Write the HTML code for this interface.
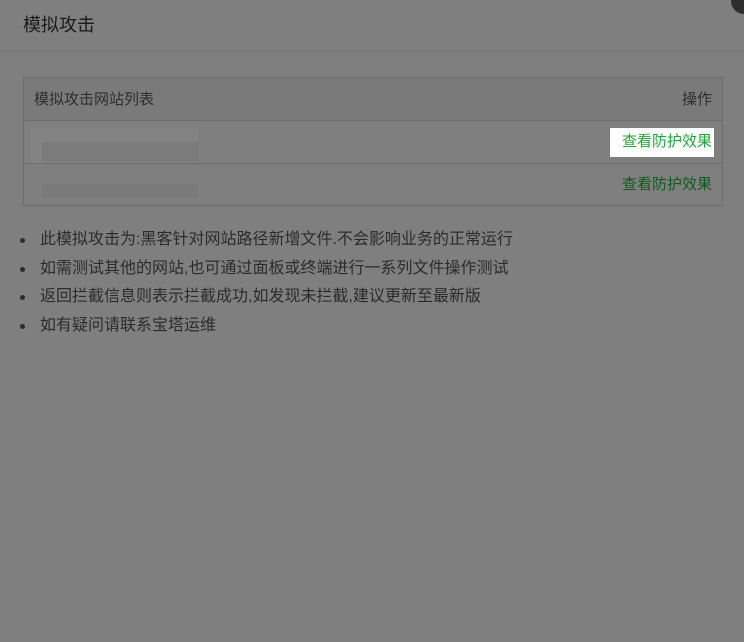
<!DOCTYPE html>
<html><head><meta charset="utf-8"><style>
*{margin:0;padding:0;box-sizing:border-box}
body{width:744px;height:642px;background:#7f7f7f;font-family:"Liberation Sans","Noto Sans CJK SC",sans-serif;position:relative;overflow:hidden}
.title{position:absolute;left:23px;top:13px;font-size:18px;color:#1a1a1a;line-height:24px}
.hl{position:absolute;left:0;top:51px;width:744px;height:1px;background:#747474}
.close{position:absolute;left:731px;top:-12px;width:26px;height:26px;border-radius:50%;background:#2e2e2e}
.tbl{position:absolute;left:23px;top:77px;width:700px;height:129px;border:1px solid #6e6e6e}
.row{position:absolute;left:0;width:698px;border-bottom:1px solid #6e6e6e}
.th{top:0;height:43px;background:#7a7a7a}
.r1{top:43px;height:43px}
.r2{top:86px;height:42px;border-bottom:none}
.txt{position:absolute;font-size:15px;line-height:20px}
.blur{position:absolute;background:#858585}
ul{position:absolute;left:20px;top:226px;list-style:none}
li{font-size:16px;color:#2b2b2b;line-height:28.5px;padding-left:20px;position:relative;white-space:nowrap}
li:before{content:"";position:absolute;left:0;top:12px;width:5px;height:5px;border-radius:50%;background:#2b2b2b}
</style></head><body>
<div class="title">模拟攻击</div>
<div class="hl"></div>
<div class="close"></div>
<div class="tbl">
 <div class="row th"><span class="txt" style="left:10px;top:12px;color:#2e2e2e">模拟攻击网站列表</span><span class="txt" style="right:10px;top:12px;color:#2e2e2e">操作</span></div>
 <div class="row r1">
  <div class="blur" style="left:6px;top:6px;width:168px;height:36px;background:#838383"></div>
  <div class="blur" style="left:18px;top:21px;width:156px;height:20px;background:#7b7b7b"></div>
  <div style="position:absolute;left:586px;top:7px;width:104px;height:29px;background:#fff"></div>
  <span class="txt" style="left:598px;top:11px;color:#20a53a">查看防护效果</span>
 </div>
 <div class="row r2">
  <div class="blur" style="left:18px;top:20px;width:156px;height:14px;background:#7a7a7a"></div>
  <span class="txt" style="left:598px;top:11px;color:#105a1d">查看防护效果</span>
 </div>
</div>
<ul>
<li>此模拟攻击为:黑客针对网站路径新增文件.不会影响业务的正常运行</li>
<li>如需测试其他的网站,也可通过面板或终端进行一系列文件操作测试</li>
<li>返回拦截信息则表示拦截成功,如发现未拦截,建议更新至最新版</li>
<li>如有疑问请联系宝塔运维</li>
</ul>
</body></html>
